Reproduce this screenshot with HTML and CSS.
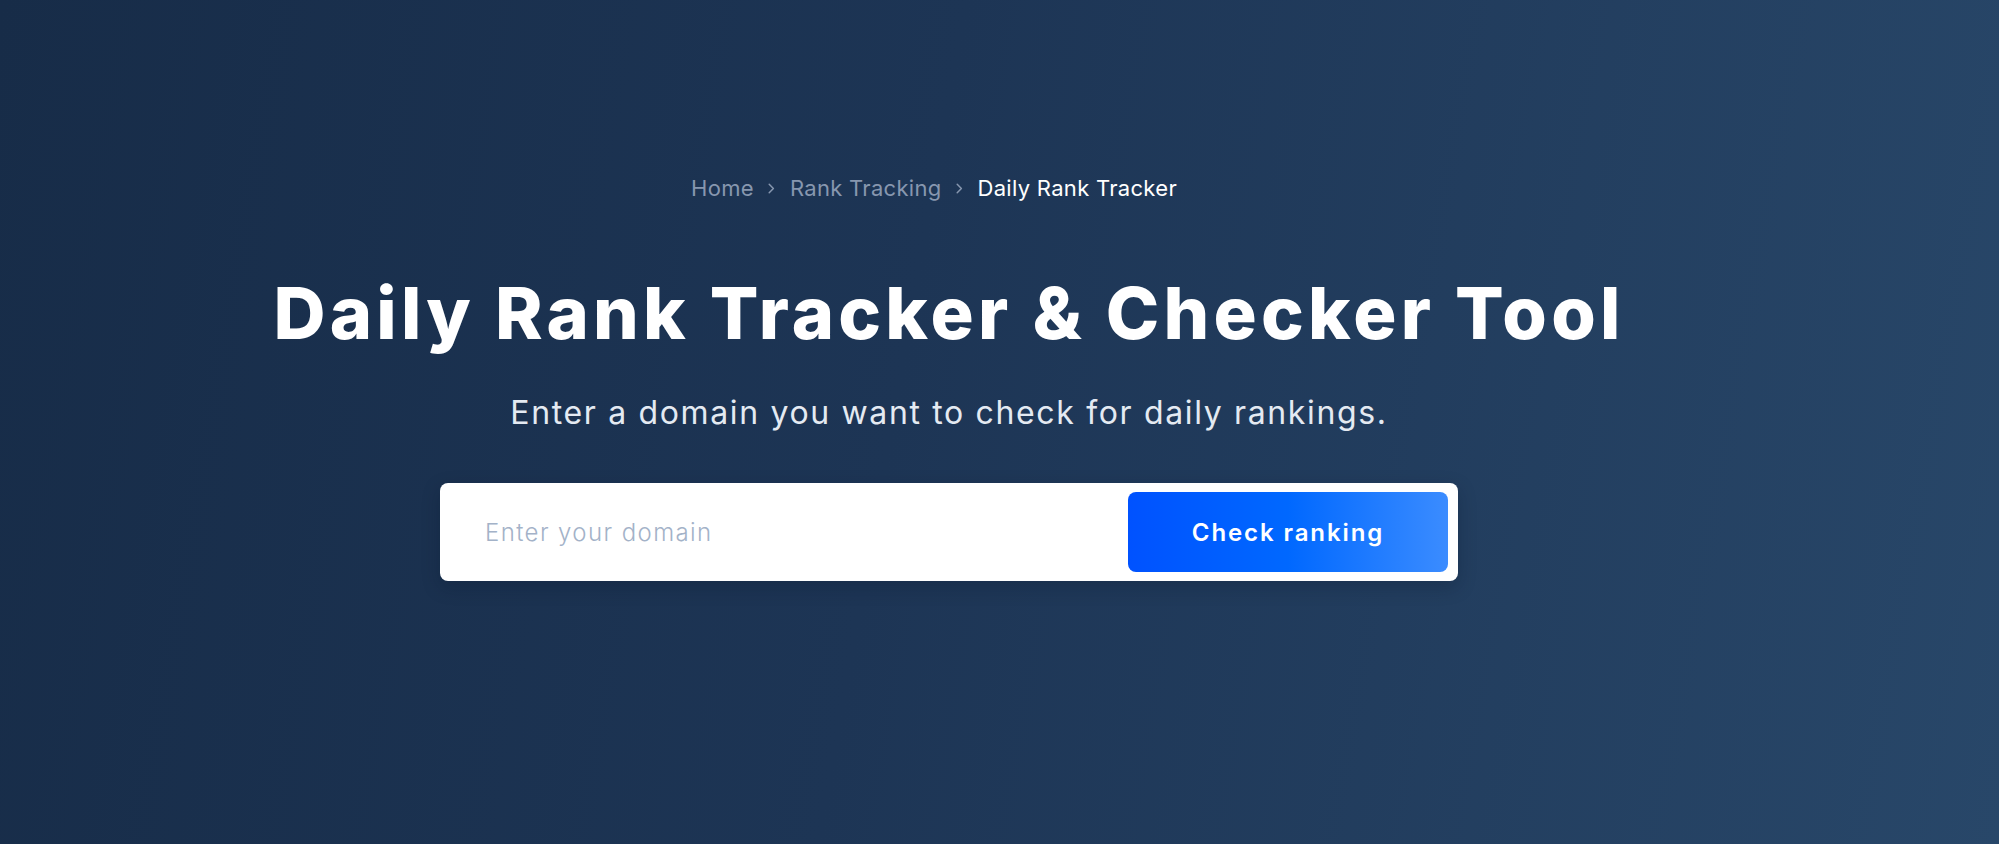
FILE: index.html
```html
<!DOCTYPE html>
<html lang="en">
<head>
<meta charset="utf-8">
<title>Daily Rank Tracker &amp; Checker Tool</title>
<link rel="stylesheet" href="styles.css">
</head>
<body>
<main class="hero">
  <div class="container">
    <nav class="crumbs" aria-label="Breadcrumb">
      <a class="crumb" href="#">Home</a>
      <svg class="chev" width="7" height="11" viewBox="0 0 7 11" aria-hidden="true"><path d="M1.2 1.2 L5.4 5.5 L1.2 9.8" fill="none" stroke="currentColor" stroke-width="1.5" stroke-linecap="round" stroke-linejoin="round"/></svg>
      <a class="crumb" href="#">Rank Tracking</a>
      <svg class="chev" width="7" height="11" viewBox="0 0 7 11" aria-hidden="true"><path d="M1.2 1.2 L5.4 5.5 L1.2 9.8" fill="none" stroke="currentColor" stroke-width="1.5" stroke-linecap="round" stroke-linejoin="round"/></svg>
      <span class="crumb current">Daily Rank Tracker</span>
    </nav>
    <h1 class="title">Daily Rank Tracker &amp; Checker Tool</h1>
    <p class="lead">Enter a domain you want to check for daily rankings.</p>
    <form class="search" onsubmit="return false;">
      <input class="search-input" type="text" placeholder="Enter your domain">
      <button class="search-btn" type="submit">Check ranking</button>
    </form>
  </div>
</main>
</body>
</html>
```
FILE: styles.css
```css
* { box-sizing: border-box; }
html, body { margin: 0; padding: 0; }
body {
  font-family: Inter, "Noto Sans", "Liberation Sans", sans-serif;
  background: #1b3150;
}
.hero {
  height: 844px;
  background: linear-gradient(100deg, #172c48 0%, #1d3555 45%, #284769 100%);
  overflow: hidden;
}
.container {
  width: 1898px;
  padding-top: 173px;
  display: flex;
  flex-direction: column;
  align-items: center;
}
.crumbs {
  display: flex;
  align-items: center;
  font-size: 22px;
  line-height: 30px;
  padding-right: 30px;
  letter-spacing: 0.3px;
}
.crumb {
  color: #8797af;
  text-decoration: none;
}
.crumb.current { color: #ffffff; }
.chev {
  color: #8797af;
  margin: 0 15px 0 14px;
}
.title {
  margin: 67px 0 0;
  font-size: 72px;
  line-height: 86px;
  font-weight: 800;
  color: #ffffff;
  letter-spacing: 4.2px;
}
.lead {
  margin: 37px 0 0;
  font-size: 32px;
  line-height: 40px;
  font-weight: 400;
  color: #e4eaf2;
  letter-spacing: 1.65px;
}
.search {
  margin-top: 50px;
  width: 1018px;
  height: 98px;
  background: #ffffff;
  border-radius: 8px;
  box-shadow: 0 6px 18px rgba(8, 20, 40, 0.25);
  display: flex;
  align-items: center;
  padding: 9px 10px 9px 45px;
}
.search-input {
  flex: 1;
  border: 0;
  outline: 0;
  background: transparent;
  font-family: inherit;
  font-size: 24px;
  font-weight: 300;
  letter-spacing: 1.4px;
  color: #334;
  padding: 0;
}
.search-input::placeholder { color: #a3b2c8; }
.search-btn {
  width: 320px;
  height: 80px;
  border: 0;
  border-radius: 8px;
  background: linear-gradient(90deg, #0052ff 0%, #0068ff 50%, #3b8cff 100%);
  color: #ffffff;
  font-family: inherit;
  font-size: 24px;
  font-weight: 600;
  letter-spacing: 1.9px;
  cursor: pointer;
}
```
